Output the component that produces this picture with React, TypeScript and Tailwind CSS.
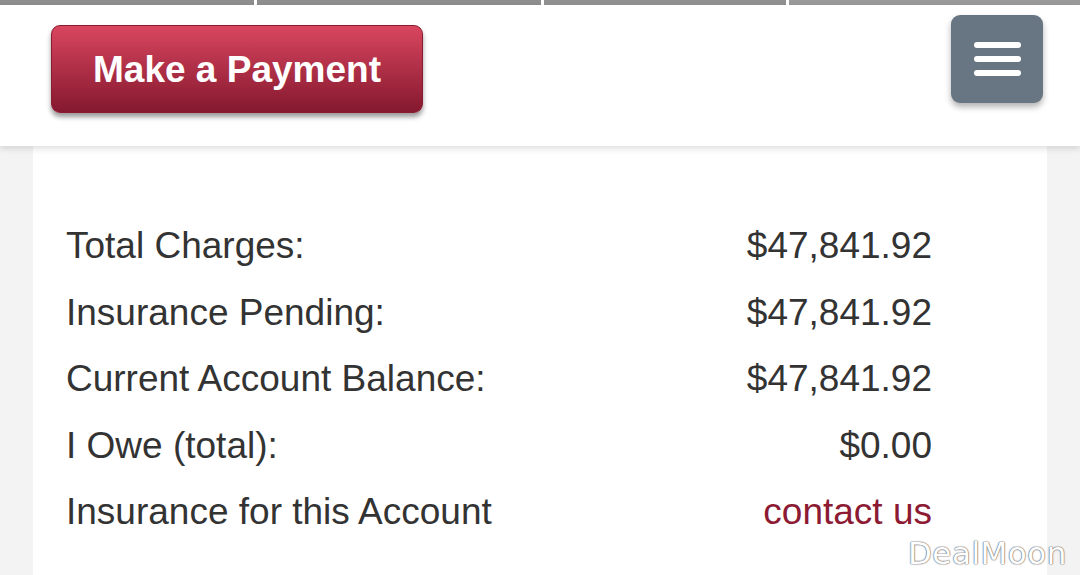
import React from "react";

const rows: { label: string; value: string; link?: boolean }[] = [
  { label: "Total Charges:", value: "$47,841.92" },
  { label: "Insurance Pending:", value: "$47,841.92" },
  { label: "Current Account Balance:", value: "$47,841.92" },
  { label: "I Owe (total):", value: "$0.00" },
  { label: "Insurance for this Account", value: "contact us", link: true },
];

export default function App() {
  return (
    <div
      className="relative h-[575px] w-[1080px] overflow-hidden bg-[#f3f3f3]"
      style={{ fontFamily: '"Liberation Sans", Arial, Helvetica, sans-serif' }}
    >
      {/* top strip */}
      <div className="flex h-[5px] gap-[3px] bg-white">
        <div className="w-[254px] bg-[#8e8e8e]" />
        <div className="w-[284px] bg-[#8e8e8e]" />
        <div className="w-[242px] bg-[#909090]" />
        <div className="flex-1 bg-[#9a9a9a]" />
      </div>

      {/* header */}
      <div className="relative z-10 flex h-[141px] justify-between bg-white shadow-[0_3px_6px_rgba(0,0,0,0.12)]">
        <div className="pl-[51px] pt-[20px]">
          <button className="flex h-[88px] w-[372px] items-center justify-center rounded-[9px] border border-[#8a1b30] bg-gradient-to-b from-[#d9465f] to-[#85182f] pt-[2px] text-[37px] font-bold text-white shadow-[0_4px_5px_rgba(0,0,0,0.4)]">
            Make a Payment
          </button>
        </div>
        <div className="pr-[37px] pt-[10px]">
          <button className="flex h-[88px] w-[92px] flex-col items-center justify-center gap-[8px] rounded-[9px] bg-[#677682] shadow-[0_4px_6px_rgba(0,0,0,0.3)]">
            <span className="block h-[6px] w-[47px] rounded-full bg-white" />
            <span className="block h-[6px] w-[47px] rounded-full bg-white" />
            <span className="block h-[6px] w-[47px] rounded-full bg-white" />
          </button>
        </div>
      </div>

      {/* content card */}
      <div className="px-[33px]">
        <div className="h-[440px] bg-white pl-[33px] pr-[115px] pt-[67px]">
          {rows.map((r) => (
            <div
              key={r.label}
              className="flex h-[66.5px] items-center justify-between text-[37px] leading-[66px] text-[#333333]"
            >
              <span>{r.label}</span>
              <span className={r.link ? "text-[#8c1a33]" : ""}>{r.value}</span>
            </div>
          ))}
        </div>
      </div>

      {/* watermark */}
      <div
        className="absolute left-[908px] top-[530px] text-[31px] tracking-[0.5px] text-white [text-shadow:0_0_1px_#666,0_0_1px_#666,0_0_2px_#999]"
        style={{ fontFamily: '"DejaVu Sans", sans-serif' }}
      >
        DealMoon
      </div>
    </div>
  );
}
